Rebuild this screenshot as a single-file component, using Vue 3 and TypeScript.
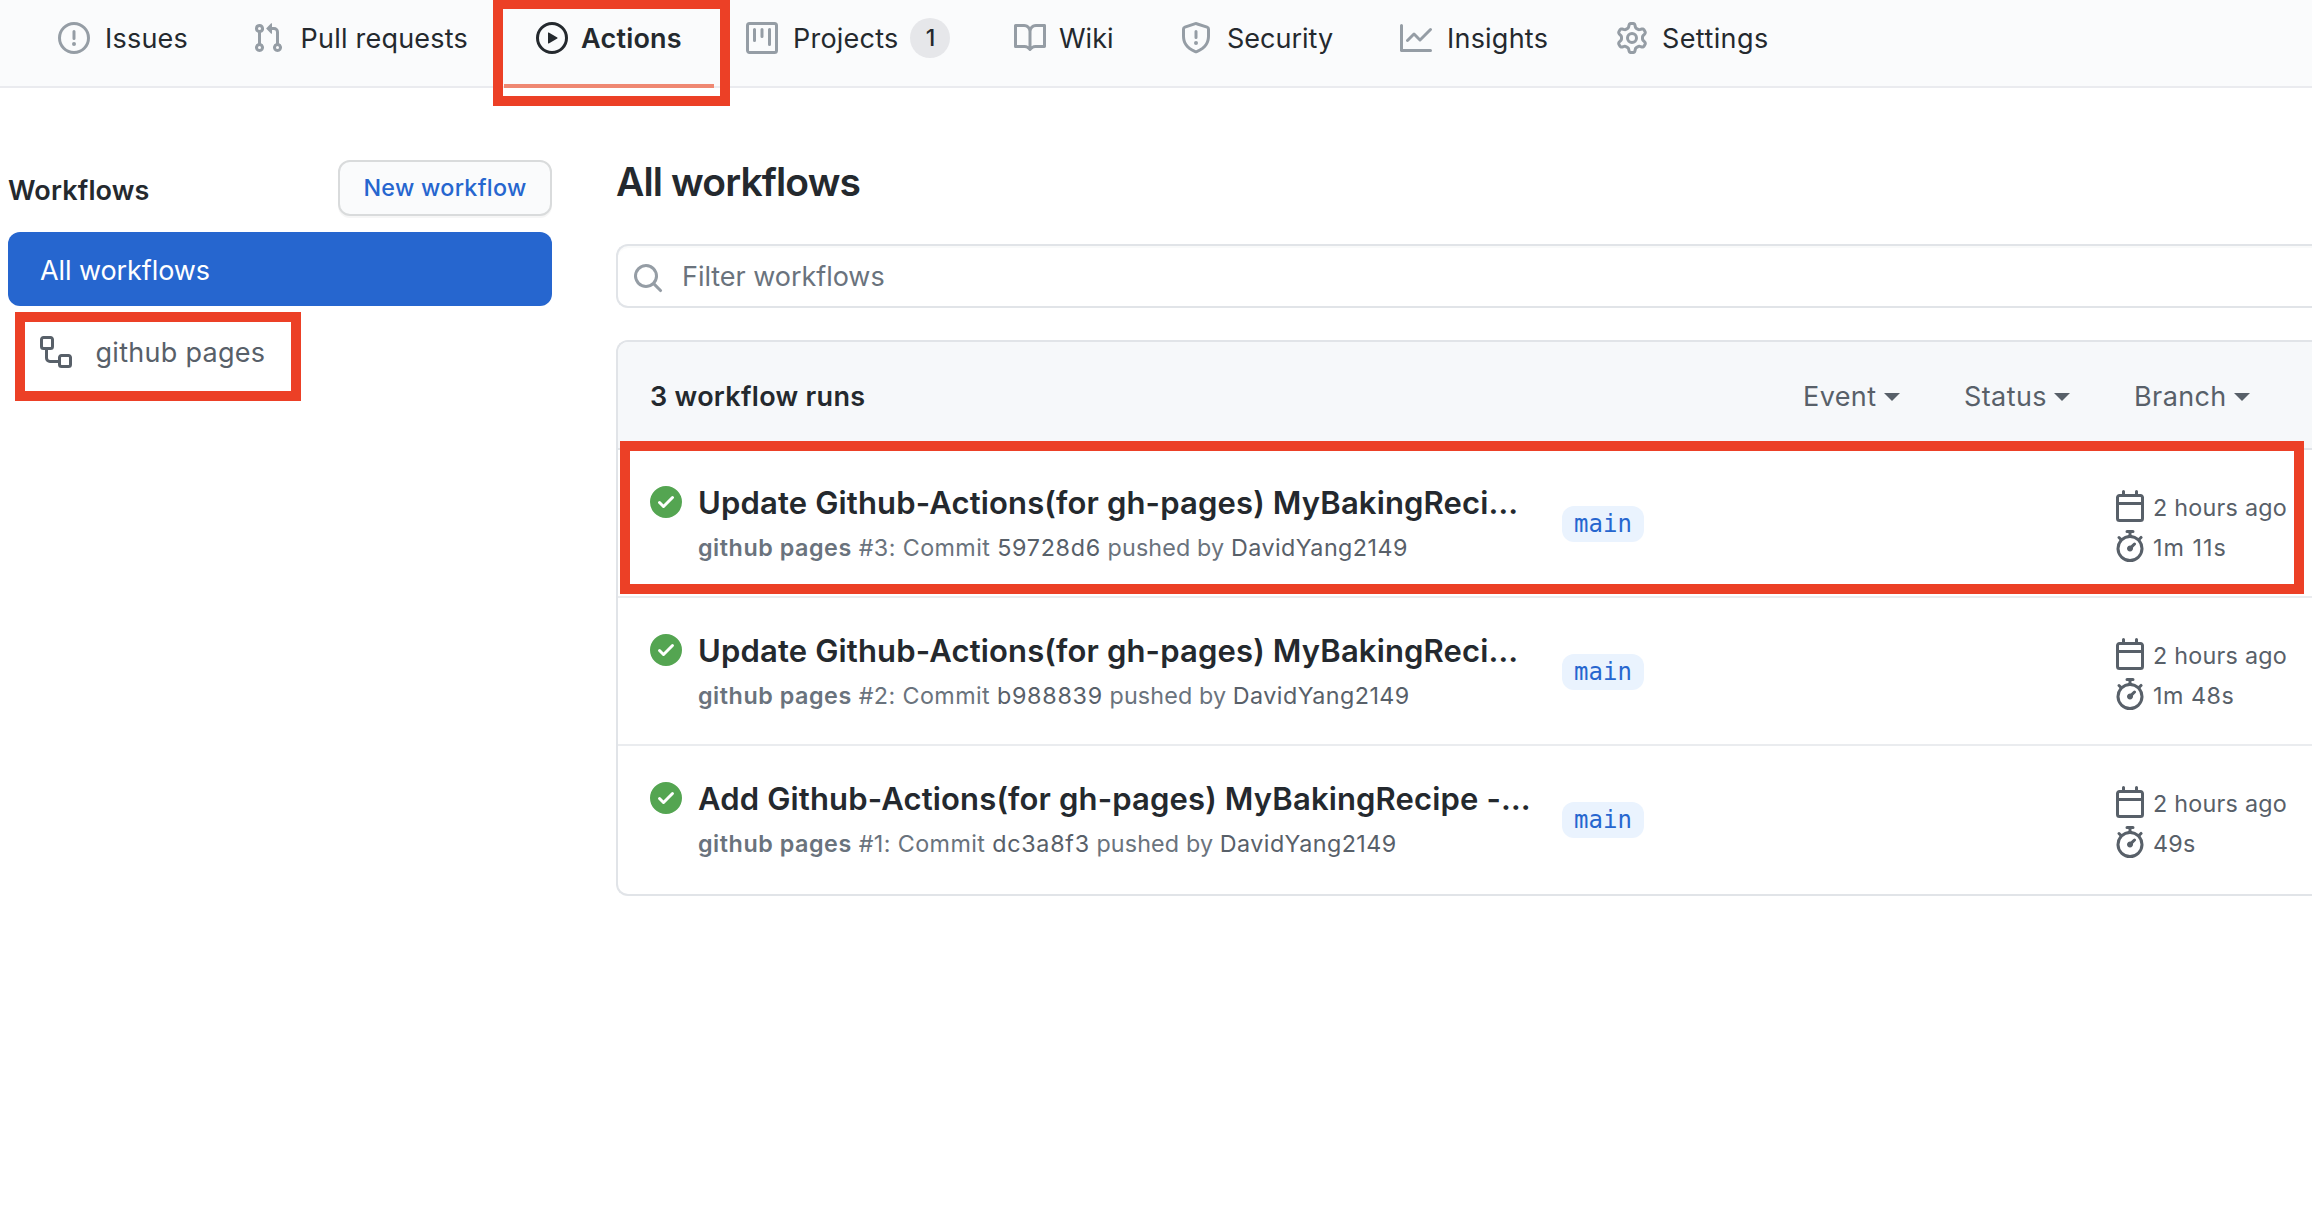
<script setup lang="ts">
interface Tab { id: string; label: string; icon: string; count?: number; active?: boolean }
interface Run { id: number; title: string; sha: string; duration: string }

const icons: Record<string, string> = {
  issue: 'M8 1.5a6.5 6.5 0 100 13 6.5 6.5 0 000-13zM0 8a8 8 0 1116 0A8 8 0 010 8zm9 3a1 1 0 11-2 0 1 1 0 012 0zm-.25-6.25a.75.75 0 00-1.5 0v3.5a.75.75 0 001.5 0v-3.5z',
  pull: 'M7.177 3.073L9.573.677A.25.25 0 0110 .854v4.792a.25.25 0 01-.427.177L7.177 3.427a.25.25 0 010-.354zM3.75 2.5a.75.75 0 100 1.5.75.75 0 000-1.5zm-2.25.75a2.25 2.25 0 113 2.122v5.256a2.251 2.251 0 11-1.5 0V5.372A2.25 2.25 0 011.5 3.25zM11 2.5h-1V4h1a1 1 0 011 1v5.628a2.251 2.251 0 101.5 0V5A2.5 2.5 0 0011 2.5zm1 10.25a.75.75 0 111.5 0 .75.75 0 01-1.5 0zM3.75 12a.75.75 0 100 1.5.75.75 0 000-1.5z',
  play: 'M1.5 8a6.5 6.5 0 1113 0 6.5 6.5 0 01-13 0zM8 0a8 8 0 100 16A8 8 0 008 0zM6.379 5.227A.25.25 0 006 5.442v5.117a.25.25 0 00.379.214l4.264-2.559a.25.25 0 000-.428L6.379 5.227z',
  project: 'M1.75 0A1.75 1.75 0 000 1.75v12.5C0 15.216.784 16 1.75 16h12.5A1.75 1.75 0 0016 14.25V1.75A1.75 1.75 0 0014.25 0H1.75zM1.5 1.75a.25.25 0 01.25-.25h12.5a.25.25 0 01.25.25v12.5a.25.25 0 01-.25.25H1.75a.25.25 0 01-.25-.25V1.75zM11.75 3a.75.75 0 00-.75.75v7.5a.75.75 0 001.5 0v-7.5a.75.75 0 00-.75-.75zm-8.25.75a.75.75 0 011.5 0v5.5a.75.75 0 01-1.5 0v-5.5zM8 3a.75.75 0 00-.75.75v3.5a.75.75 0 001.5 0v-3.5A.75.75 0 008 3z',
  book: 'M0 1.75A.75.75 0 01.75 1h4.253c1.227 0 2.317.59 3 1.501A3.744 3.744 0 0111.006 1h4.245a.75.75 0 01.75.75v10.5a.75.75 0 01-.75.75h-4.507a2.25 2.25 0 00-1.591.659l-.622.621a.75.75 0 01-1.06 0l-.622-.621A2.25 2.25 0 005.258 13H.75a.75.75 0 01-.75-.75V1.75zm8.755 3a2.25 2.25 0 012.25-2.25H14.5v9h-3.757c-.71 0-1.4.201-1.992.572l.004-7.322zm-1.504 7.324l.004-5.073-.002-2.253A2.25 2.25 0 005.003 2.5H1.5v9h3.757a3.75 3.75 0 011.994.574z',
  shield: 'M7.467.133a1.75 1.75 0 011.066 0l5.25 1.68A1.75 1.75 0 0115 3.48V7c0 1.566-.32 3.182-1.303 4.682-.983 1.498-2.585 2.813-5.032 3.855a1.7 1.7 0 01-1.33 0c-2.447-1.042-4.049-2.357-5.032-3.855C1.32 10.182 1 8.566 1 7V3.48a1.75 1.75 0 011.217-1.667l5.25-1.68zm.61 1.429a.25.25 0 00-.153 0l-5.25 1.68a.25.25 0 00-.174.238V7c0 1.358.275 2.666 1.057 3.86.784 1.194 2.121 2.34 4.366 3.297a.2.2 0 00.154 0c2.245-.956 3.582-2.104 4.366-3.298C13.225 9.666 13.5 8.36 13.5 7V3.48a.25.25 0 00-.174-.237l-5.25-1.68zM9 10.5a1 1 0 11-2 0 1 1 0 012 0zm-.25-5.75a.75.75 0 10-1.5 0v3a.75.75 0 001.5 0v-3z',
  graph: 'M1.5 1.75a.75.75 0 00-1.5 0v12.5c0 .414.336.75.75.75h14.5a.75.75 0 000-1.5H1.5V1.75zm14.28 2.53a.75.75 0 00-1.06-1.06L10 7.94 7.53 5.47a.75.75 0 00-1.06 0L3.22 8.72a.75.75 0 001.06 1.06L7 7.06l2.47 2.47a.75.75 0 001.06 0l5.25-5.25z',
  gear: 'M7.429 1.525a6.593 6.593 0 011.142 0c.036.003.108.036.137.146l.289 1.105c.147.56.55.967.997 1.189.174.086.341.183.501.29.417.278.97.423 1.53.27l1.102-.303c.11-.03.175.016.195.046.219.31.41.641.573.989.014.031.022.11-.059.19l-.815.806c-.411.406-.562.957-.53 1.456a4.588 4.588 0 010 .582c-.032.499.119 1.05.53 1.456l.815.806c.08.08.073.159.059.19a6.494 6.494 0 01-.573.99c-.02.029-.086.074-.195.045l-1.103-.303c-.559-.153-1.112-.008-1.529.27-.16.107-.327.204-.5.29-.449.222-.851.628-.998 1.189l-.289 1.105c-.029.11-.101.143-.137.146a6.613 6.613 0 01-1.142 0c-.036-.003-.108-.037-.137-.146l-.289-1.105c-.147-.56-.55-.967-.997-1.189a4.502 4.502 0 01-.501-.29c-.417-.278-.97-.423-1.53-.27l-1.102.303c-.11.03-.175-.016-.195-.046a6.492 6.492 0 01-.573-.989c-.014-.031-.022-.11.059-.19l.815-.806c.411-.406.562-.957.53-1.456a4.587 4.587 0 010-.582c.032-.499-.119-1.05-.53-1.456l-.815-.806c-.08-.08-.073-.159-.059-.19a6.44 6.44 0 01.573-.99c.02-.029.086-.075.195-.045l1.103.303c.559.153 1.112.008 1.529-.27.16-.107.327-.204.5-.29.449-.222.851-.628.998-1.189l.289-1.105c.029-.11.101-.143.137-.146zM8 0c-.236 0-.47.01-.701.03-.743.065-1.29.615-1.458 1.261l-.29 1.106c-.017.066-.078.158-.211.224a5.994 5.994 0 00-.668.386c-.123.082-.233.09-.3.071L3.27 2.776c-.644-.177-1.392.02-1.82.63a7.977 7.977 0 00-.704 1.217c-.315.675-.111 1.422.363 1.891l.815.806c.05.048.098.147.088.294a6.084 6.084 0 000 .772c.01.147-.038.246-.088.294l-.815.806c-.474.469-.678 1.216-.363 1.891.2.428.436.835.704 1.218.428.609 1.176.806 1.82.63l1.103-.303c.066-.019.176-.011.299.071.213.143.436.272.668.386.133.066.194.158.212.224l.289 1.106c.169.646.715 1.196 1.458 1.26a8.094 8.094 0 001.402 0c.743-.064 1.29-.614 1.458-1.26l.29-1.106c.017-.066.078-.158.211-.224a5.98 5.98 0 00.668-.386c.123-.082.233-.09.3-.071l1.102.302c.644.177 1.392-.02 1.82-.63.268-.382.505-.789.704-1.217.315-.675.111-1.422-.364-1.891l-.814-.806c-.05-.048-.098-.147-.088-.294a6.1 6.1 0 000-.772c-.01-.147.039-.246.088-.294l.814-.806c.475-.469.679-1.216.364-1.891a7.992 7.992 0 00-.704-1.218c-.428-.609-1.176-.806-1.82-.63l-1.103.303c-.066.019-.176.011-.299-.071a5.991 5.991 0 00-.668-.386c-.133-.066-.194-.158-.212-.224L10.16 1.29C9.99.645 9.444.095 8.701.031A8.094 8.094 0 008 0zm1.5 8a1.5 1.5 0 11-3 0 1.5 1.5 0 013 0zM11 8a3 3 0 11-6 0 3 3 0 016 0z',
  workflow: 'M0 1.75C0 .784.784 0 1.75 0h3.5C6.216 0 7 .784 7 1.75v3.5A1.75 1.75 0 015.25 7H4v4a1 1 0 001 1h4v-1.25C9 9.784 9.784 9 10.75 9h3.5c.966 0 1.75.784 1.75 1.75v3.5A1.75 1.75 0 0114.25 16h-3.5A1.75 1.75 0 019 14.25v-.75H5A2.5 2.5 0 012.5 11V7h-.75A1.75 1.75 0 010 5.25v-3.5zm1.75-.25a.25.25 0 00-.25.25v3.5c0 .138.112.25.25.25h3.5a.25.25 0 00.25-.25v-3.5a.25.25 0 00-.25-.25h-3.5zm9 9a.25.25 0 00-.25.25v3.5c0 .138.112.25.25.25h3.5a.25.25 0 00.25-.25v-3.5a.25.25 0 00-.25-.25h-3.5z',
  search: 'M11.5 7a4.499 4.499 0 11-8.998 0A4.499 4.499 0 0111.5 7zm-.82 4.74a6 6 0 111.06-1.06l3.04 3.04a.75.75 0 11-1.06 1.06l-3.04-3.04z',
  check: 'M8 16A8 8 0 108 0a8 8 0 000 16zm3.78-9.72a.75.75 0 00-1.06-1.06L6.75 9.19 5.28 7.72a.75.75 0 00-1.06 1.06l2 2a.75.75 0 001.06 0l4.5-4.5z',
  calendar: 'M4.75 0a.75.75 0 01.75.75V2h5V.75a.75.75 0 011.5 0V2h1.25c.966 0 1.75.784 1.75 1.75v10.5A1.75 1.75 0 0113.25 16H2.75A1.75 1.75 0 011 14.25V3.75C1 2.784 1.784 2 2.75 2H4V.75A.75.75 0 014.75 0zm0 3.5h8.5a.25.25 0 01.25.25V6h-11V3.75a.25.25 0 01.25-.25h2zm-2.25 4v6.75c0 .138.112.25.25.25h10.5a.25.25 0 00.25-.25V7.5h-11z',
  stopwatch: 'M5.75.75A.75.75 0 016.5 0h3a.75.75 0 010 1.5h-.75v1l-.001.041a6.718 6.718 0 013.464 1.435l.007-.006.75-.75a.75.75 0 111.06 1.06l-.75.75-.006.007a6.75 6.75 0 11-10.548 0L2.72 5.03l-.75-.75a.75.75 0 011.06-1.06l.75.75.007.006A6.718 6.718 0 017.25 2.541a.756.756 0 010-.041v-1H6.5a.75.75 0 01-.75-.75zM8 14.5A5.25 5.25 0 108 4a5.25 5.25 0 000 10.5zm.389-6.7l1.33-1.33a.75.75 0 111.061 1.06L9.45 8.861A1.502 1.502 0 018 10.75a1.5 1.5 0 11.389-2.95z',
}

const tabs: Tab[] = [
  { id: 'issues', label: 'Issues', icon: 'issue' },
  { id: 'pulls', label: 'Pull requests', icon: 'pull' },
  { id: 'actions', label: 'Actions', icon: 'play', active: true },
  { id: 'projects', label: 'Projects', icon: 'project', count: 1 },
  { id: 'wiki', label: 'Wiki', icon: 'book' },
  { id: 'security', label: 'Security', icon: 'shield' },
  { id: 'insights', label: 'Insights', icon: 'graph' },
  { id: 'settings', label: 'Settings', icon: 'gear' },
]

const filters = ['Event', 'Status', 'Branch']

const runs: Run[] = [
  { id: 3, title: 'Update Github-Actions(for gh-pages) MyBakingReci…', sha: '59728d6', duration: '1m 11s' },
  { id: 2, title: 'Update Github-Actions(for gh-pages) MyBakingReci…', sha: 'b988839', duration: '1m 48s' },
  { id: 1, title: 'Add Github-Actions(for gh-pages) MyBakingRecipe -…', sha: 'dc3a8f3', duration: '49s' },
]
</script>

<template>
  <div class="page">
    <nav class="nav">
      <a v-for="t in tabs" :key="t.id" class="tab" :class="['tab-' + t.id, { active: t.active }]">
        <svg class="icon" viewBox="0 0 16 16"><path fill-rule="evenodd" :d="icons[t.icon]" /></svg>
        <span class="tab-label">{{ t.label }}</span>
        <span v-if="t.count" class="counter">{{ t.count }}</span>
      </a>
    </nav>
    <div class="body">
      <aside class="side">
        <div class="side-head">
          <h2 class="side-title">Workflows</h2>
          <button class="new-btn">New workflow</button>
        </div>
        <a class="side-item selected"><span>All workflows</span></a>
        <a class="side-item">
          <svg class="icon" viewBox="0 0 16 16"><path fill-rule="evenodd" :d="icons.workflow" /></svg>
          <span class="side-label">github pages</span>
        </a>
      </aside>
      <main class="main">
        <h1 class="title">All workflows</h1>
        <div class="search">
          <svg class="icon" viewBox="0 0 16 16"><path fill-rule="evenodd" :d="icons.search" /></svg>
          <span class="search-text">Filter workflows</span>
        </div>
        <section class="box">
          <header class="box-head">
            <strong class="count">3 workflow runs</strong>
            <span v-for="f in filters" :key="f" class="filter" :class="'filter-' + f.toLowerCase()"><span class="filter-text">{{ f }}</span><i class="caret"></i></span>
          </header>
          <article v-for="r in runs" :key="r.id" class="run">
            <svg class="icon ok" viewBox="0 0 16 16"><path fill-rule="evenodd" :d="icons.check" /></svg>
            <div class="info">
              <div class="run-title">{{ r.title }}</div>
              <div class="run-sub"><b>github pages</b><span class="event"> #{{ r.id }}: Commit </span><em class="sha">{{ r.sha }}</em><span class="by"> pushed by </span><em>DavidYang2149</em></div>
            </div>
            <span class="branch">main</span>
            <div class="meta">
              <div class="meta-row"><svg class="icon" viewBox="0 0 16 16"><path fill-rule="evenodd" :d="icons.calendar" /></svg><span>2 hours ago</span></div>
              <div class="meta-row" :class="'duration-' + r.id"><svg class="icon" viewBox="0 0 16 16"><path fill-rule="evenodd" :d="icons.stopwatch" /></svg><span>{{ r.duration }}</span></div>
            </div>
          </article>
        </section>
      </main>
    </div>
    <div class="mark mark-tab"></div>
    <div class="mark mark-side"></div>
    <div class="mark mark-run"></div>
  </div>
</template>

<style>
body { margin: 0; background: #fff; overflow: hidden; }
</style>

<style scoped>
.page { position: relative; width: 2312px; height: 1216px; overflow: hidden; background: #fff; color: #24292e; font-family: Inter, "Liberation Sans", sans-serif; font-size: 27px; line-height: 40px; }
.page * { box-sizing: border-box; }
.icon { display: block; width: 32px; height: 32px; flex: none; fill: currentColor; }

.nav { display: flex; height: 88px; padding-left: 58px; background: #fafbfc; border-bottom: 2px solid #eaebef; }
.tab { position: relative; display: flex; align-items: center; height: 76px; flex: none; }
.tab .icon { color: #959da5; margin-right: 15px; }
.tab-label { padding-top: 2px; white-space: nowrap; letter-spacing: .22px; }
.tab-issues { width: 194px; }
.tab-pulls { width: 284px; }
.tab-pulls .icon { margin-right: 16.5px; }
.tab-actions { width: 210px; }
.tab-projects { width: 268px; }
.tab-wiki { width: 166px; }
.tab-wiki .icon { margin-right: 13px; }
.tab-wiki .tab-label, .tab-security .tab-label { letter-spacing: 0; }
.tab-security { width: 220px; }
.tab-insights { width: 216px; }
.tab-settings .icon { margin-right: 14px; }
.tab-settings .tab-label { letter-spacing: .4px; }
.tab.active { font-weight: 600; }
.tab.active .icon { color: #24292e; margin-right: 13px; }
.tab.active::after { content: ""; position: absolute; left: -32px; top: 84px; width: 210px; height: 4px; background: #ef8872; }
.counter { width: 40px; height: 40px; margin-left: 12px; border-radius: 20px; background: #e6e7ea; font-size: 23px; font-weight: 500; line-height: 40px; text-align: center; }

.body { display: flex; padding-left: 8px; }
.side { width: 544px; margin-right: 64px; padding-top: 72px; flex: none; }
.side-head { display: flex; justify-content: space-between; height: 56px; margin-bottom: 16px; }
.side-title { margin: 11px 0 0; font-size: 27px; font-weight: 600; line-height: 40px; letter-spacing: .15px; }
.new-btn { width: 214px; height: 56px; padding: 0; border: 2px solid #d9dbdc; border-radius: 12px; background: #fafbfc; box-shadow: 0 2px 0 rgba(27, 31, 35, .04); color: #2666cf; font: 500 23.3px/48px Inter, "Liberation Sans", sans-serif; letter-spacing: .3px; }
.side-item { display: flex; align-items: center; height: 74px; padding: 0 32px; border-radius: 12px; color: #586069; }
.side-item.selected { padding-top: 4px; background: #2666cf; color: #fff; letter-spacing: -.08px; }
.side-item + .side-item { margin-top: 9px; }
.side-label { margin-left: 23.5px; padding-top: 1px; letter-spacing: .28px; }

.main { flex: 1; min-width: 0; padding-top: 64px; }
.title { margin: 0 0 32px; font-size: 39px; font-weight: 600; line-height: 60px; letter-spacing: -.88px; }
.search { display: flex; align-items: center; height: 64px; padding-left: 14px; border: 2px solid #e1e4e8; border-right: 0; border-radius: 12px 0 0 12px; box-shadow: inset 0 2px 0 rgba(225, 228, 232, .2); color: #6a737d; }
.search .icon { margin: 4px 18px 0 0; color: #959da5; }
.search-text { padding-top: 2px; letter-spacing: -.04px; }
.box { margin-top: 32px; border: 2px solid #e1e4e8; border-right: 0; border-radius: 12px 0 0 12px; overflow: hidden; }
.box-head { display: flex; align-items: center; height: 108px; padding: 2px 0 0 32px; background: #f6f8fa; border-bottom: 2px solid #e1e4e8; }
.count { width: 1153px; padding-top: 2px; font-weight: 600; letter-spacing: .3px; }
.filter { display: flex; align-items: center; color: #586069; letter-spacing: .4px; }
.filter-text { padding-top: 2px; }
.filter-event { width: 161px; }
.filter-status { width: 170px; }
.caret { margin-left: 7.5px; margin-top: 2px; border: 8px solid transparent; border-top-color: currentColor; border-bottom: 0; }

.run { display: flex; height: 148px; padding-left: 32px; border-bottom: 2px solid #eaecef; }
.run:last-child { border-bottom: 0; }
.ok { margin: 36px 16px 0 0; color: #54a551; }
.info { width: 864px; padding-top: 33px; flex: none; }
.run-title { font-size: 31px; font-weight: 600; line-height: 40px; letter-spacing: .15px; white-space: nowrap; }
.run-sub { margin-top: 7px; font-size: 23.3px; line-height: 36px; color: #6a737d; white-space: pre; }
.run-sub b { font-weight: 600; letter-spacing: .55px; }
.run-sub em { font-style: normal; color: #586069; letter-spacing: .45px; }
.run-sub .event { letter-spacing: .4px; }
.run-sub .sha { letter-spacing: .72px; }
.run-sub .by { letter-spacing: .14px; }
.branch { width: 82px; height: 36px; margin-top: 56px; border-radius: 12px; background: #eaf3fe; color: #2666cf; font: 24px/36px "DejaVu Sans Mono", monospace; text-align: center; }
.meta { margin: 40px 0 0 470px; color: #586069; font-size: 23.3px; letter-spacing: .25px; }
.meta-row { display: flex; height: 32px; margin-bottom: 8px; line-height: 36px; white-space: nowrap; }
.meta-row .icon { margin-right: 7px; }
.duration-3 { letter-spacing: 1px; }
.duration-2 { letter-spacing: .5px; }

.mark { position: absolute; border: 10px solid #ec4026; }
.mark-tab { left: 493px; top: -1px; width: 237px; height: 107px; }
.mark-side { left: 15px; top: 312px; width: 286px; height: 89px; }
.mark-run { left: 620px; top: 441px; width: 1684px; height: 153px; }
</style>
